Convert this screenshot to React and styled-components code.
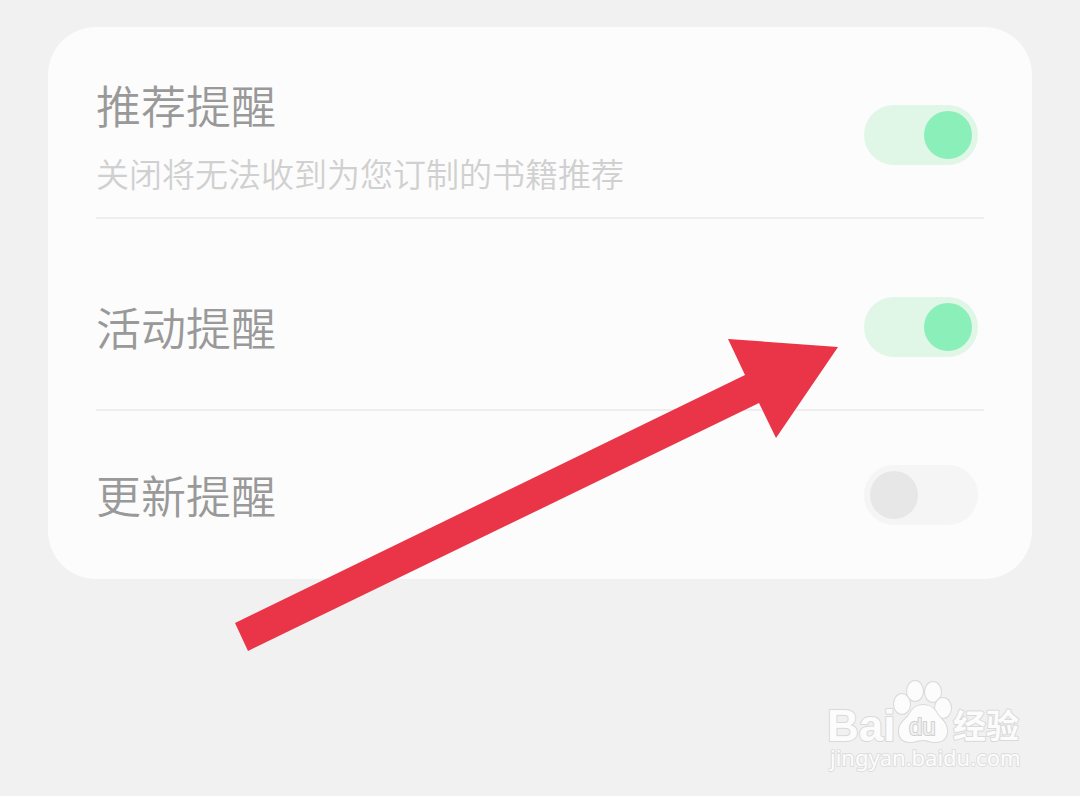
import React, { useState } from "react";
import styled, { createGlobalStyle } from "styled-components";

const GlobalStyle = createGlobalStyle`
  *, *::before, *::after { box-sizing: border-box; }
  body {
    margin: 0;
    background: #f1f1f1;
    font-family: "Noto Sans CJK SC", "Noto Sans", sans-serif;
  }
`;

const Page = styled.main`
  position: relative;
  display: flex;
  flex-direction: column;
  min-height: 100vh;
  padding: 27px 48px 20px;
  overflow: hidden;
`;

const Card = styled.section`
  padding: 26px 48px 0;
  border-radius: 48px;
  background: #fcfcfc;
`;

const Row = styled.label`
  display: flex;
  align-items: center;
  justify-content: space-between;
  gap: 24px;
  min-height: 166px;
  padding-right: 6px;
  border-bottom: 2px solid #eeeeee;
  cursor: pointer;

  & + & {
    min-height: 192px;
    padding-top: 26px;
  }

  &:last-child {
    min-height: 168px;
    padding-top: 0;
    border-bottom: 0;
  }
`;

const Copy = styled.span`
  display: flex;
  flex-direction: column;
  gap: 16px;
`;

const Title = styled.span`
  color: #999999;
  font-size: 45px;
  font-weight: 350;
  line-height: 60px;
`;

const Hint = styled.span`
  color: #d0d0d0;
  font-size: 33px;
  font-weight: 350;
  line-height: 44px;
`;

const Switch = styled.input`
  appearance: none;
  flex: none;
  display: flex;
  width: 114px;
  height: 60px;
  margin: 0;
  padding: 6px;
  border-radius: 30px;
  background: #f5f5f5;
  cursor: pointer;

  &::before {
    content: "";
    width: 48px;
    height: 48px;
    border-radius: 50%;
    background: #e7e7e7;
  }

  &:checked {
    justify-content: flex-end;
    background: #e0f7e8;
  }

  &:checked::before {
    background: #8aefb8;
  }
`;

const Arrow = styled.svg`
  position: absolute;
  top: 330px;
  left: 220px;
  width: 640px;
  height: 330px;
  pointer-events: none;
`;

const Footer = styled.footer`
  display: flex;
  justify-content: flex-end;
  margin-top: auto;
`;

const Logo = styled.svg`
  display: block;
  width: 204px;
  height: 100px;
  fill: #fcfcfc;
  stroke: #d9d9d9;
  stroke-width: 2px;
  stroke-linejoin: round;
  paint-order: stroke;
`;

const Latin = styled.text`
  font-family: "Liberation Sans", Arial, sans-serif;
  font-size: 44px;
  font-weight: 700;
`;

const Chinese = styled.text`
  font-family: "Noto Sans CJK SC", sans-serif;
  font-size: 33px;
  font-weight: 700;
`;

const PawText = styled.text`
  font-family: "Liberation Sans", Arial, sans-serif;
  font-size: 24px;
  fill: #f1f1f1;
  stroke: #cfcfcf;
`;

const Address = styled.text`
  font-family: "Noto Sans", sans-serif;
  font-size: 22px;
  stroke: #dedede;
`;

const reminders = [
  { id: "recommend", title: "推荐提醒", hint: "关闭将无法收到为您订制的书籍推荐", on: true },
  { id: "activity", title: "活动提醒", on: true },
  { id: "update", title: "更新提醒", on: false },
];

function Reminder({ item }) {
  const [on, setOn] = useState(item.on);
  return (
    <Row htmlFor={item.id}>
      <Copy>
        <Title>{item.title}</Title>
        {item.hint && <Hint>{item.hint}</Hint>}
      </Copy>
      <Switch
        id={item.id}
        type="checkbox"
        role="switch"
        checked={on}
        onChange={(e) => setOn(e.target.checked)}
      />
    </Row>
  );
}

export default function App() {
  return (
    <>
      <GlobalStyle />
      <Page>
        <Card>
          {reminders.map((item) => (
            <Reminder key={item.id} item={item} />
          ))}
        </Card>
        <Arrow viewBox="0 0 640 330" aria-hidden="true">
          <path fill="#e93547" d="M15 293 L525 45 L508 9 L618 17 L556 108 L539 73 L28 321 Z" />
        </Arrow>
        <Footer>
          <Logo viewBox="0 0 204 100">
            <Latin x="-1" y="65">Bai</Latin>
            <ellipse cx="74" cy="28" rx="8" ry="10" />
            <ellipse cx="87" cy="15" rx="8" ry="10" />
            <ellipse cx="105" cy="16" rx="8" ry="10" />
            <ellipse cx="115" cy="32" rx="8" ry="10" />
            <path d="M95 29 C103 29 107 33 110 39 C114 44 119 47 119 55 C119 63 114 66 107 66 C102 66 99 64 95 64 C91 64 87 66 82 66 C75 66 71 62 71 55 C71 47 77 44 81 39 C84 33 88 29 95 29 Z" />
            <PawText x="81" y="59">du</PawText>
            <Chinese x="125" y="62">经验</Chinese>
            <Address x="2" y="90">jingyan.baidu.com</Address>
          </Logo>
        </Footer>
      </Page>
    </>
  );
}
